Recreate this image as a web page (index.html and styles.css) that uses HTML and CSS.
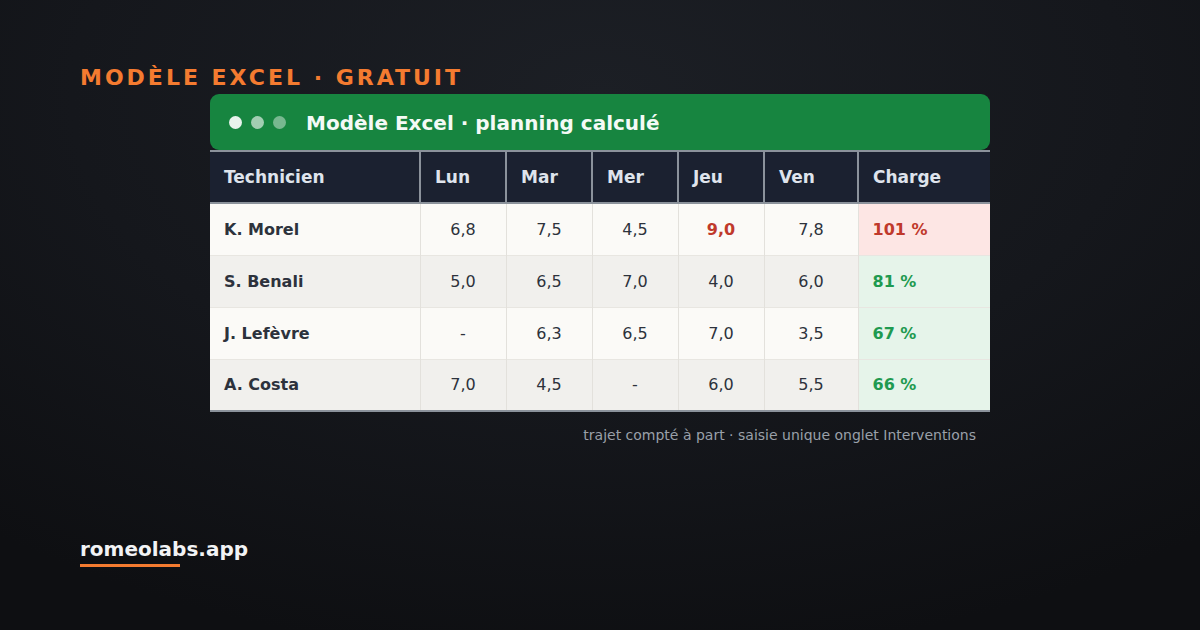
FILE: index.html
```html
<!DOCTYPE html>
<html lang="fr">
<head>
<meta charset="utf-8">
<title>Modèle Excel · planning calculé</title>
<link rel="stylesheet" href="styles.css">
</head>
<body>
<div class="page">
  <div class="kicker">MODÈLE EXCEL · GRATUIT</div>
  <div class="card">
    <div class="card-head">
      <span class="dots"><i class="dot d1"></i><i class="dot d2"></i><i class="dot d3"></i></span>
      <span class="card-title">Modèle Excel · planning calculé</span>
    </div>
    <table class="grid">
      <colgroup>
        <col class="c-name"><col class="c-day"><col class="c-day"><col class="c-day"><col class="c-day"><col class="c-ven"><col class="c-charge">
      </colgroup>
      <thead>
        <tr><th>Technicien</th><th>Lun</th><th>Mar</th><th>Mer</th><th>Jeu</th><th>Ven</th><th>Charge</th></tr>
      </thead>
      <tbody>
        <tr><td class="name">K. Morel</td><td>6,8</td><td>7,5</td><td>4,5</td><td class="over">9,0</td><td>7,8</td><td class="charge bad">101 %</td></tr>
        <tr><td class="name">S. Benali</td><td>5,0</td><td>6,5</td><td>7,0</td><td>4,0</td><td>6,0</td><td class="charge ok">81 %</td></tr>
        <tr><td class="name">J. Lefèvre</td><td>-</td><td>6,3</td><td>6,5</td><td>7,0</td><td>3,5</td><td class="charge ok">67 %</td></tr>
        <tr><td class="name">A. Costa</td><td>7,0</td><td>4,5</td><td>-</td><td>6,0</td><td>5,5</td><td class="charge ok">66 %</td></tr>
      </tbody>
    </table>
    <div class="note">trajet compté à part · saisie unique onglet Interventions</div>
  </div>
  <div class="brand">
    <div class="brand-name">romeolabs.app</div>
    <div class="brand-line"></div>
  </div>
</div>
</body>
</html>
```

FILE: styles.css
```css
* { box-sizing: border-box; margin: 0; padding: 0; }
html, body { width: 1200px; height: 630px; overflow: hidden; }
body {
  font-family: "DejaVu Sans", "Noto Sans", sans-serif;
  background: radial-gradient(ellipse 80% 90% at 50% 15%, #1c1f25 0%, #15171c 55%, #0e0f12 100%);
  color: #fff;
}
.page {
  height: 630px;
  padding: 65px 80px 63px 80px;
  display: flex;
  flex-direction: column;
}
.kicker {
  font-size: 22px;
  line-height: 26px;
  font-weight: bold;
  letter-spacing: 3px;
  color: #f47b30;
}
.card {
  margin: 3px 130px 0 130px;
  width: 780px;
}
.card-head {
  height: 56px;
  background: #178540;
  border-radius: 9px;
  display: flex;
  align-items: center;
  padding-left: 19px;
}
.dots { display: flex; gap: 9px; }
.dot { display: block; width: 13px; height: 13px; border-radius: 50%; }
.d1 { background: rgba(255,255,255,0.9); }
.d2 { background: rgba(255,255,255,0.6); }
.d3 { background: rgba(255,255,255,0.42); }
.card-title {
  margin-left: 20px;
  padding-top: 2px;
  font-size: 20px;
  font-weight: bold;
  color: #f4faf6;
}
.grid {
  width: 780px;
  table-layout: fixed;
  border-collapse: collapse;
  font-size: 16px;
}
.c-name { width: 210px; }
.c-day { width: 86px; }
.c-ven { width: 94px; }
.c-charge { width: 132px; }
.grid th {
  height: 52px;
  background: #1b2130;
  color: #dfe4ec;
  font-size: 17px;
  font-weight: bold;
  text-align: left;
  padding-left: 14px;
  border-top: 2px solid #8b929b;
  border-bottom: 2px solid #8b929b;
  border-left: 2px solid #8b929b;
}
.grid th:first-child { border-left: none; }
.grid td {
  height: 52px;
  color: #2d323c;
  text-align: center;
  border-left: 1px solid #e3e1dc;
  border-top: 1px solid #e8e6e1;
}
.grid td:first-child { border-left: none; }
.grid tbody tr:nth-child(odd) td { background: #fbfaf7; }
.grid tbody tr:nth-child(even) td { background: #f1f0ed; }
.grid tbody tr:last-child td { border-bottom: 2px solid #8b929b; }
.grid td.name { text-align: left; padding-left: 14px; font-weight: bold; }
.grid td.over { color: #c0392b; font-weight: bold; }
.grid td.charge { text-align: left; padding-left: 14px; font-weight: bold; }
.grid tbody tr td.bad { background: #fde6e4; color: #c0392b; }
.grid tbody tr td.ok { background: #e6f4ea; color: #1f9a50; }
.note {
  margin-top: 15px;
  padding-right: 14px;
  text-align: right;
  font-size: 14px;
  line-height: 17px;
  color: #9aa0a9;
}
.brand { margin-top: auto; }
.brand-name {
  font-size: 20px;
  line-height: 24px;
  font-weight: bold;
  color: #f2f3f5;
}
.brand-line {
  margin-top: 3px;
  width: 100px;
  height: 3px;
  background: #f47b30;
}
```
